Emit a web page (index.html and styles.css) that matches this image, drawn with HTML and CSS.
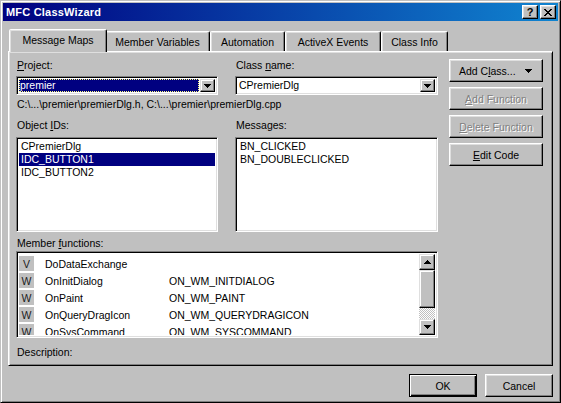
FILE: index.html
```html
<!DOCTYPE html>
<html>
<head>
<meta charset="utf-8">
<title>MFC ClassWizard</title>
<link rel="stylesheet" href="styles.css">
</head>
<body>
<div class="window">
  <div class="titlebar">
    <span class="title">MFC ClassWizard</span>
    <div class="tbtns">
      <div class="tbtn help">?</div>
      <div class="tbtn close"><svg width="8" height="7" viewBox="0 0 8 7"><path d="M0 0h2v1H0zM6 0h2v1H6zM1 1h2v1H1zM5 1h2v1H5zM2 2h4v1H2zM3 3h2v1H3zM2 4h4v1H2zM1 5h2v1H1zM5 5h2v1H5zM0 6h2v1H0zM6 6h2v1H6z" fill="#000"/></svg></div>
    </div>
  </div>

  <div class="tabs">
    <div class="tab sel t-mm">Message Maps</div>
    <div class="tab t-mv">Member Variables</div>
    <div class="tab t-au">Automation</div>
    <div class="tab t-ax">ActiveX Events</div>
    <div class="tab t-ci">Class Info</div>
  </div>

  <div class="panel">
    <div class="form">
      <div class="lbl"><u>P</u>roject:</div>
      <div class="lbl">Class <u>n</u>ame:</div>

      <div class="combo">
        <div class="combo-text hl">premier</div>
        <div class="dd"><svg width="7" height="4" viewBox="0 0 7 4"><path d="M0 0h7v1H0zM1 1h5v1H1zM2 2h3v1H2zM3 3h1v1H3z" fill="#000"/></svg></div>
      </div>
      <div class="combo">
        <div class="combo-text">CPremierDlg</div>
        <div class="dd"><svg width="7" height="4" viewBox="0 0 7 4"><path d="M0 0h7v1H0zM1 1h5v1H1zM2 2h3v1H2zM3 3h1v1H3z" fill="#000"/></svg></div>
      </div>

      <div class="path span2">C:\...\premier\premierDlg.h, C:\...\premier\premierDlg.cpp</div>

      <div class="lbl lbl2">Object <u>I</u>Ds:</div>
      <div class="lbl lbl2">Messa<u>g</u>es:</div>

      <div class="list">
        <div class="item">CPremierDlg</div>
        <div class="item selitem">IDC_BUTTON1</div>
        <div class="item">IDC_BUTTON2</div>
      </div>
      <div class="list">
        <div class="item">BN_CLICKED</div>
        <div class="item">BN_DOUBLECLICKED</div>
      </div>

      <div class="lbl lbl3 span2">Member <u>f</u>unctions:</div>

      <div class="mlist span2">
        <div class="rows">
          <div class="row"><span class="cell-ic"><span class="ic">V</span></span><span class="fn">DoDataExchange</span><span class="msg"></span></div>
          <div class="row"><span class="cell-ic"><span class="ic">W</span></span><span class="fn">OnInitDialog</span><span class="msg">ON_WM_INITDIALOG</span></div>
          <div class="row"><span class="cell-ic"><span class="ic">W</span></span><span class="fn">OnPaint</span><span class="msg">ON_WM_PAINT</span></div>
          <div class="row"><span class="cell-ic"><span class="ic">W</span></span><span class="fn">OnQueryDragIcon</span><span class="msg">ON_WM_QUERYDRAGICON</span></div>
          <div class="row"><span class="cell-ic"><span class="ic">W</span></span><span class="fn">OnSysCommand</span><span class="msg">ON_WM_SYSCOMMAND</span></div>
        </div>
        <div class="sbar">
          <div class="sb-btn"><svg width="7" height="4" viewBox="0 0 7 4"><path d="M3 0h1v1H3zM2 1h3v1H2zM1 2h5v1H1zM0 3h7v1H0z" fill="#000"/></svg></div>
          <div class="sb-thumb"></div>
          <div class="sb-track"></div>
          <div class="sb-btn"><svg width="7" height="4" viewBox="0 0 7 4"><path d="M0 0h7v1H0zM1 1h5v1H1zM2 2h3v1H2zM3 3h1v1H3z" fill="#000"/></svg></div>
        </div>
      </div>

      <div class="lbl lbl4 span2">Description:</div>
    </div>

    <div class="side">
      <div class="btn addclass"><span>Add C<u>l</u>ass...</span><svg width="7" height="4" viewBox="0 0 7 4"><path d="M0 0h7v1H0zM1 1h5v1H1zM2 2h3v1H2zM3 3h1v1H3z" fill="#000"/></svg></div>
      <div class="btn dis"><span><u>A</u>dd Function</span></div>
      <div class="btn dis"><span><u>D</u>elete Function</span></div>
      <div class="btn"><span><u>E</u>dit Code</span></div>
    </div>
  </div>

  <div class="footer">
    <div class="btn fbtn def">OK</div>
    <div class="btn fbtn">Cancel</div>
  </div>
</div>
</body>
</html>
```

FILE: styles.css
```css
* { box-sizing: border-box; }
html, body { margin: 0; padding: 0; }
body {
  width: 561px;
  height: 403px;
  overflow: hidden;
  background: #c0c0c0;
  font-family: "Liberation Sans", Arial, sans-serif;
  font-size: 10.5px;
  color: #000;
}
u { text-underline-offset: 1px; }

.window {
  width: 561px;
  height: 403px;
  background: #c0c0c0;
  border: 1px solid;
  border-color: #c0c0c0 #000 #000 #c0c0c0;
  box-shadow: inset 1px 1px #fff, inset -1px -1px #808080;
  padding: 2px;
  display: flex;
  flex-direction: column;
}

/* title bar */
.titlebar {
  height: 18px;
  flex: none;
  background: linear-gradient(to right, #000080, #1084d0);
  display: flex;
  align-items: center;
  padding: 0 2px 0 3px;
}
.title {
  flex: 1;
  color: #fff;
  font-weight: bold;
  font-size: 11px;
  letter-spacing: 0.2px;
}
.tbtns { display: flex; gap: 2px; }
.tbtn {
  width: 16px;
  height: 14px;
  background: #c0c0c0;
  border: 1px solid;
  border-color: #fff #000 #000 #fff;
  box-shadow: inset -1px -1px #808080, inset 1px 1px #dfdfdf;
  display: flex;
  align-items: center;
  justify-content: center;
  font-weight: bold;
  font-size: 11px;
  line-height: 1;
}
.help { padding-top: 1px; }

/* tabs */
.tabs {
  flex: none;
  height: 22px;
  margin-top: 8px;
  padding-left: 8px;
  display: flex;
  align-items: flex-end;
  position: relative;
  z-index: 1;
}
.tab {
  height: 20px;
  background: #c0c0c0;
  border: 1px solid;
  border-bottom: none;
  border-color: #fff #000 transparent #fff;
  border-radius: 2px 2px 0 0;
  box-shadow: inset -1px 0 #808080, inset 1px 1px #dfdfdf;
  display: flex;
  align-items: center;
  justify-content: center;
  padding-top: 1px;
  white-space: nowrap;
}
.t-mm { width: 94px; }
.t-mv { width: 105px; }
.t-au { width: 75px; }
.t-ax { width: 96px; }
.t-ci { width: 67px; }
.tab.sel {
  width: 98px;
  height: 23px;
  margin: 0 -2px -1px -2px;
  padding-top: 0;
  padding-bottom: 2px;
  position: relative;
  z-index: 2;
}

/* panel */
.panel {
  flex: none;
  height: 315px;
  margin: 0 5px;
  border: 1px solid;
  border-color: #fff #000 #000 #fff;
  box-shadow: inset 1px 1px #dfdfdf, inset -1px -1px #808080;
  padding: 7px 0 0 7px;
  display: flex;
  align-items: flex-start;
}
.form {
  width: 422px;
  display: grid;
  grid-template-columns: 202px 203px;
  column-gap: 17px;
  align-content: start;
}
.span2 { grid-column: 1 / 3; }
.lbl {
  height: 13px;
  line-height: 13px;
  padding-left: 1px;
  white-space: nowrap;
}
.lbl2 { margin-top: 8px; }
.lbl3 { margin-top: 5px; }
.lbl4 { margin-top: 8px; }

.combo {
  margin-top: 4px;
  height: 19px;
  background: #fff;
  border: 1px solid;
  border-color: #808080 #fff #fff #808080;
  box-shadow: inset 1px 1px #000, inset -1px -1px #dfdfdf;
  padding: 2px;
  display: flex;
}
.combo-text {
  flex: 1;
  line-height: 13px;
  padding-left: 1px;
  margin-right: 1px;
}
.combo-text.hl {
  background: #000080;
  color: #fff;
  outline: 1px dotted #ffff80;
  outline-offset: -1px;
}
.dd {
  width: 15px;
  height: 13px;
  background: #c0c0c0;
  border: 1px solid;
  border-color: #dfdfdf #000 #000 #dfdfdf;
  box-shadow: inset -1px -1px #808080, inset 1px 1px #fff;
  display: flex;
  align-items: center;
  justify-content: center;
}

.path {
  margin-top: 3px;
  height: 13px;
  line-height: 13px;
  padding-left: 1px;
  white-space: nowrap;
}

.list {
  margin-top: 5px;
  height: 95px;
  background: #fff;
  border: 1px solid;
  border-color: #808080 #fff #fff #808080;
  box-shadow: inset 1px 1px #000, inset -1px -1px #dfdfdf;
  padding: 2px;
}
.item {
  height: 13px;
  line-height: 13px;
  padding-left: 2px;
  white-space: nowrap;
}
.selitem { background: #000080; color: #fff; }

.mlist {
  margin-top: 1px;
  height: 87px;
  background: #fff;
  border: 1px solid;
  border-color: #808080 #fff #fff #808080;
  box-shadow: inset 1px 1px #000, inset -1px -1px #dfdfdf;
  padding: 2px;
  display: flex;
}
.rows {
  flex: 1;
  overflow: hidden;
  padding-top: 1px;
}
.row {
  height: 17px;
  display: grid;
  grid-template-columns: 26px 124px 1fr;
  align-items: center;
  white-space: nowrap;
}
.ic {
  width: 15px;
  height: 15px;
  background: #c0c0c0;
  display: flex;
  align-items: center;
  justify-content: center;
  color: #202020;
  font-size: 10.5px;
}
.cell-ic { display: flex; align-items: center; }

.sbar {
  width: 16px;
  display: flex;
  flex-direction: column;
}
.sb-btn, .sb-thumb {
  background: #c0c0c0;
  border: 1px solid;
  border-color: #dfdfdf #000 #000 #dfdfdf;
  box-shadow: inset -1px -1px #808080, inset 1px 1px #fff;
}
.sb-btn {
  height: 16px;
  display: flex;
  align-items: center;
  justify-content: center;
}
.sb-thumb { height: 38px; }
.sb-track {
  flex: 1;
  background: repeating-conic-gradient(#c0c0c0 0 25%, #fff 0 50%) 0 0 / 2px 2px;
}

/* buttons */
.side {
  margin-left: 11px;
  width: 94px;
  display: flex;
  flex-direction: column;
  gap: 5px;
}
.btn {
  height: 23px;
  background: #c0c0c0;
  border: 1px solid;
  border-color: #fff #000 #000 #fff;
  box-shadow: inset -1px -1px #808080, inset 1px 1px #dfdfdf;
  display: flex;
  align-items: center;
  justify-content: center;
  white-space: nowrap;
}
.btn.addclass {
  justify-content: space-between;
  padding: 0 10px 0 9px;
}
.btn.dis { color: #808080; text-shadow: 1px 1px 0 #fff; }

.footer {
  flex: none;
  margin-top: 8px;
  padding-right: 5px;
  display: flex;
  justify-content: flex-end;
  gap: 8px;
}
.fbtn { width: 68px; }
.btn.def {
  border-color: #000;
  box-shadow: inset 1px 1px #fff, inset -1px -1px #000, inset -2px -2px #808080;
}
```
